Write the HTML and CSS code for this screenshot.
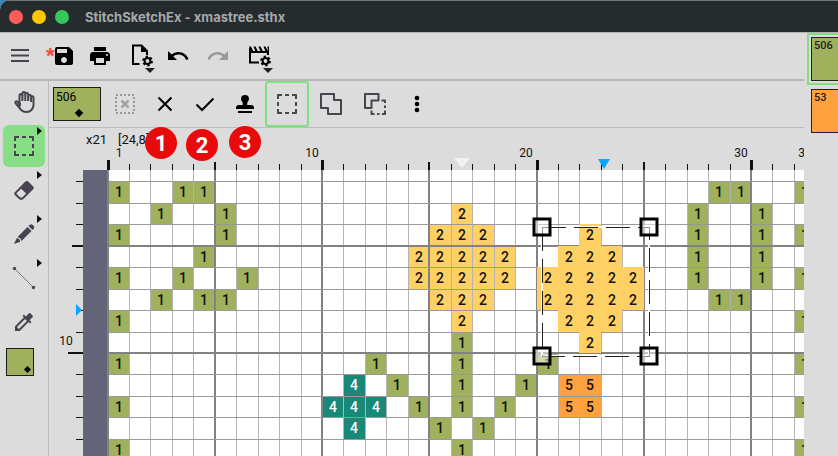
FILE: index.html
```html
<!DOCTYPE html>
<html lang="en">
<head>
    <meta charset="UTF-8">
    <meta name="viewport" content="width=device-width, initial-scale=1.0">
    <title>StitchSketchEx - xmastree.sthx</title>
    <link rel="stylesheet" href="styles.css">
</head>
<body>
    <div class="window">
        <header class="titlebar">
            <span class="light close"></span>
            <span class="light minimize"></span>
            <span class="light maximize"></span>
            <h1 class="title">StitchSketchEx - xmastree.sthx</h1>
        </header>

        <div class="workspace">
            <div class="editor">
                <!-- Main toolbar -->
                <div class="toolbar">
                    <button class="icon-button" aria-label="Menu">
                        <svg viewBox="0 0 24 24"><path class="soft-stroke" d="M3 6h18M3 11.500h18M3 17h18"/></svg>
                    </button>
                    <button class="icon-button after-menu" aria-label="Save">
                        <span class="unsaved">*</span>
                        <svg viewBox="0 0 24 24"><path d="M17 3H5a2 2 0 0 0-2 2v14a2 2 0 0 0 2 2h14c1.100 0 2-.9 2-2V7l-4-4zm-5 16c-1.660 0-3-1.340-3-3s1.340-3 3-3 3 1.340 3 3-1.340 3-3 3zm3-10H5V5h10v4z"/></svg>
                    </button>
                    <button class="icon-button" aria-label="Print">
                        <svg viewBox="0 0 24 24"><path d="M19 8H5c-1.660 0-3 1.340-3 3v6h4v4h12v-4h4v-6c0-1.660-1.340-3-3-3zm-3 11H8v-5h8v5zm3-7c-.55 0-1-.45-1-1s.45-1 1-1 1 .45 1 1-.45 1-1 1zm-1-9H6v4h12V3z"/></svg>
                    </button>
                    <button class="icon-button spaced" aria-label="Document settings">
                        <svg viewBox="0 0 24 24">
                            <path class="line" d="M9.500 20H3V1.500h8.500L17 7v4"/>
                            <path d="M11 1.500l6.500 6.500H11z"/>
                            <circle class="gear-teeth" cx="17.500" cy="17" r="4.400"/>
                            <circle class="gear-ring" cx="17.500" cy="17" r="2.900"/>
                        </svg>
                        <span class="drop"></span>
                    </button>
                    <button class="icon-button" aria-label="Undo">
                        <svg viewBox="0 0 24 24"><path d="M12.500 8c-2.650 0-5.050.99-6.900 2.600L2 7v9h9l-3.620-3.620c1.390-1.160 3.160-1.880 5.120-1.880 3.540 0 6.550 2.310 7.600 5.500l2.370-.78C21.080 11.030 17.150 8 12.500 8z"/></svg>
                    </button>
                    <button class="icon-button near" aria-label="Redo" disabled>
                        <svg viewBox="0 0 24 24"><path d="M18.400 10.600C16.550 8.990 14.150 8 11.500 8c-4.650 0-8.580 3.030-9.960 7.220L3.900 16c1.050-3.190 4.050-5.500 7.600-5.500 1.950 0 3.730.72 5.120 1.880L13 16h9V7l-3.600 3.600z"/></svg>
                    </button>
                    <button class="icon-button spaced" aria-label="Movie settings">
                        <svg viewBox="0 0 24 24">
                            <path class="line" d="M11 18.500H2V4M2 8h18v3"/>
                            <path d="M1 2.500h2l2.500 5H3zM5.500 2.500h2l2.500 5H7.500zM10.500 2.500h2l2.500 5h-2.500zM15.500 2.500h2l2.500 5h-2.500zM19.500 2.500H21V9h-1z"/>
                            <circle class="gear-teeth" cx="17.500" cy="17" r="4.400"/>
                            <circle class="gear-ring" cx="17.500" cy="17" r="2.900"/>
                        </svg>
                        <span class="drop"></span>
                    </button>
                </div>

                <div class="body">
                    <!-- Tool rail -->
                    <nav class="rail">
                        <button class="tool" aria-label="Hand">
                            <svg viewBox="0 0 24 24"><path class="soft-stroke" d="M7.500 13V5.500a1.400 1.400 0 0 1 2.900 0V3.500a1.400 1.400 0 0 1 2.900 0v1a1.400 1.400 0 0 1 2.900 0V6.500a1.400 1.400 0 0 1 2.900 0V7.500a1.200 1.200 0 0 1 2.400 0V15c0 4-3 7-7 7-3 0-5-1-6.500-3.500L3.500 13c-.8-1.600 1.200-2.400 2.200-1.200l2.300 3.700V13"/><path class="soft-stroke" d="M10.400 5v6M13.300 4.500V11M16.200 6v5M19.100 8v4"/></svg>
                        </button>
                        <button class="tool active" aria-label="Select">
                            <svg viewBox="0 0 24 24"><path class="soft-stroke" d="M3 7V3h4M10 3h4M17 3h4v4M21 10v4M21 17v4h-4M14 21h-4M7 21H3v-4M3 14v-4"/></svg>
                            <span class="flyout"></span>
                        </button>
                        <button class="tool" aria-label="Eraser">
                            <svg viewBox="0 0 24 24"><path class="soft" d="M16.240 3.560l4.950 4.940c.78.79.78 2.050 0 2.840L12 20.530a4.008 4.008 0 0 1-5.660 0L2.810 17c-.78-.79-.78-2.050 0-2.840l10.600-10.600c.79-.78 2.050-.78 2.830 0M4.220 15.580l3.540 3.530c.78.79 2.040.79 2.830 0l3.530-3.530-4.950-4.950-4.950 4.950z"/></svg>
                            <span class="flyout"></span>
                        </button>
                        <button class="tool" aria-label="Pencil">
                            <svg viewBox="0 0 24 24"><path class="soft" d="M16.500 4l1.300-1.200c.8-.8 2-.8 2.800 0l1.100 1.100c.8.8.8 2 0 2.800L20.400 8zM15.500 5l4 4L9.500 19l-1.200-2.800L5.500 15zM4.800 16l2.500 1 1 2.700L2 22z"/></svg>
                            <span class="flyout"></span>
                        </button>
                        <button class="tool" aria-label="Line">
                            <svg viewBox="0 0 24 24"><path class="guide" d="M2.500 2.500l19 19"/><circle class="soft" cx="2.500" cy="2.500" r="1.700"/><circle class="soft" cx="21.500" cy="21.500" r="1.700"/></svg>
                            <span class="flyout"></span>
                        </button>
                        <button class="tool" aria-label="Color picker">
                            <svg viewBox="0 0 24 24"><path class="soft" d="M20.710 5.630l-2.340-2.340a.996.996 0 0 0-1.410 0l-3.120 3.120-1.930-1.910-1.410 1.410 1.420 1.420L3 16.250V21h4.750l8.920-8.920 1.420 1.420 1.410-1.410-1.920-1.920 3.120-3.120c.4-.4.4-1.030.01-1.420zM6.920 19L5 17.080l8.060-8.060 1.920 1.920L6.920 19z"/></svg>
                        </button>
                        <button class="swatch current" aria-label="Current color"><span class="diamond"></span></button>
                    </nav>

                    <div class="stage">
                        <!-- Selection options -->
                        <div class="options">
                            <button class="swatch wide">506<span class="diamond"></span></button>
                            <button class="option" aria-label="Clear selection" disabled>
                                <svg viewBox="0 0 24 24"><path class="dotted" d="M3 3h18v18H3z"/><path class="line" d="M8.500 8.500l7 7M15.500 8.500l-7 7"/></svg>
                            </button>
                            <button class="option" aria-label="Cancel">
                                <svg viewBox="0 0 24 24"><path class="line" d="M5.500 5.500l13 13M18.500 5.500l-13 13"/></svg>
                            </button>
                            <button class="option" aria-label="Apply">
                                <svg viewBox="0 0 24 24"><path class="line" d="M3.500 12.500L9 18 20.500 6.500"/></svg>
                            </button>
                            <button class="option" aria-label="Stamp">
                                <svg viewBox="0 0 24 24"><path d="M12 3a4 4 0 0 1 4 4c0 2-1.800 2.500-1.800 4.500V13H18a3 3 0 0 1 3 3v1H3v-1a3 3 0 0 1 3-3h3.800v-1.500C9.800 9.500 8 9 8 7a4 4 0 0 1 4-4zM5 19h14v2H5z"/></svg>
                            </button>
                            <button class="option large active" aria-label="New selection">
                                <svg viewBox="0 0 24 24"><path class="soft-stroke" d="M3 7V3h4M10 3h4M17 3h4v4M21 10v4M21 17v4h-4M14 21h-4M7 21H3v-4M3 14v-4"/></svg>
                            </button>
                            <button class="option large" aria-label="Add to selection">
                                <svg viewBox="0 0 24 24"><path class="soft-stroke" d="M2 2h13v6h7v14H9v-6H2z"/></svg>
                            </button>
                            <button class="option large" aria-label="Subtract from selection">
                                <svg viewBox="0 0 24 24"><path class="soft-stroke" d="M2 2h13.500v6.500H8.500V16H2zM18.500 8.500H22V11M22 13.500v2.500M22 18.500V22h-3M16.500 22H14M11.500 22h-3v-3.500"/></svg>
                            </button>
                            <button class="option" aria-label="More">
                                <svg viewBox="0 0 24 24"><circle cx="12" cy="6" r="2.300"/><circle cx="12" cy="12" r="2.300"/><circle cx="12" cy="18" r="2.300"/></svg>
                            </button>
                        </div>

                        <main class="canvas">
                            <svg id="chart" class="chart" role="img" aria-label="Stitch chart"></svg>
                            <span class="badge first">1</span>
                            <span class="badge second">2</span>
                            <span class="badge third">3</span>
                        </main>
                    </div>
                </div>
            </div>

            <!-- Thread palette -->
            <aside class="palette">
                <button class="thread selected"><span class="chip green">506</span></button>
                <button class="thread"><span class="chip orange">53</span></button>
            </aside>
        </div>
    </div>

    <script src="chart.js"></script>
</body>
</html>
```
FILE: chart.js
```js
const chart = document.getElementById('chart');
const CELL = 429 / 20; // 20 stitches in 429px
const LEFT = 59;
const TOP = 11;
const RULER = 42;
const COLUMNS = 33;
const ROWS = 40;

// row: { symbol: columns }
const stitches = {
    3: { 1: [1, 4, 5, 29, 30, 33] },
    4: { 1: [3, 6, 28, 31], 2: [17] },
    5: { 1: [1, 6, 28, 31, 33], 2: [16, 17, 18] },
    6: { 1: [5, 28, 31], 2: [15, 16, 17, 18, 19] },
    7: { 1: [1, 4, 7, 28, 31, 33], 2: [15, 16, 17, 18, 19] },
    8: { 1: [3, 5, 6, 29, 30], 2: [16, 17, 18] },
    9: { 1: [1, 33], 2: [17] },
    10: { 1: [17] },
    11: { 1: [1, 13, 17, 21, 33] },
    12: { 1: [14, 17, 20], 4: [12], 5: [22, 23] },
    13: { 1: [1, 15, 17, 19, 33], 4: [11, 12, 13], 5: [22, 23] },
    14: { 1: [16, 18], 4: [12] },
    15: { 1: [1, 17, 33] }
};

// floating selection
const selected = {
    5: [23],
    6: [22, 23, 24],
    7: [21, 22, 23, 24, 25],
    8: [21, 22, 23, 24, 25],
    9: [22, 23, 24],
    10: [23]
};

const colX = n => Math.floor(LEFT + n * CELL);
const rowY = n => Math.floor(TOP + n * CELL);

function add(name, attributes, text) {
    const node = document.createElementNS('http://www.w3.org/2000/svg', name);
    for (const key in attributes) {
        node.setAttribute(key, attributes[key]);
    }
    if (text !== undefined) {
        node.textContent = text;
    }
    chart.appendChild(node);
}

function rect(x, y, width, height, className) {
    add('rect', { x, y, width, height, class: className });
}

function cell(row, col, symbol) {
    const x = colX(col - 1);
    const y = rowY(row - 1);
    rect(x, y, colX(col) - x, rowY(row) - y, 'stitch-' + symbol);
}

function symbolText(row, col, symbol) {
    add('text', { x: colX(col - 1) + 11, y: rowY(row - 1) + 16, class: 'symbol symbol-' + symbol }, symbol);
}

function eachStitch(draw) {
    for (const row in stitches) {
        for (const symbol in stitches[row]) {
            stitches[row][symbol].forEach(col => draw(Number(row), col, symbol));
        }
    }
}

// Paper and stitches
rect(LEFT, RULER, '100%', '100%', 'paper');
eachStitch(cell);

// Grid lines
for (let c = 1; c <= COLUMNS; c++) {
    const major = c % 5 === 0;
    rect(colX(c) - (major ? 1 : 0), RULER, major ? 2 : 1, '100%', major ? 'major' : 'minor-x');
}
for (let r = 2; r <= ROWS; r++) {
    const major = r % 5 === 0;
    rect(LEFT, rowY(r) - (major ? 1 : 0), '100%', major ? 2 : 1, major ? 'major' : 'minor-y');
}

// Margin
rect(34, RULER, LEFT - 35, '100%', 'margin');
rect(LEFT - 1, RULER, 2, '100%', 'major');
eachStitch(symbolText);

// Rulers
for (let c = 0; c <= COLUMNS; c++) {
    const length = c % 10 === 0 ? 10 : c % 5 === 0 ? 8 : 6;
    const width = c % 10 === 0 ? 3 : c % 5 === 0 ? 2 : 1;
    rect(colX(c) - (width > 1 ? 1 : 0), RULER - length, width, length, 'tick');
}
for (let r = 2; r <= ROWS; r++) {
    const length = r % 10 === 0 ? 15 : r % 5 === 0 ? 11 : 7;
    const width = r % 5 === 0 ? 2 : 1;
    rect(34 - length, rowY(r) - (width > 1 ? 1 : 0), length, width, 'tick');
}
[1, 10, 20, 30, 33].forEach(n => {
    add('text', { x: colX(n - 1) + 11, y: 29, class: 'label' }, n);
});
add('text', { x: 17, y: 217, class: 'label' }, 10);
add('text', { x: 37, y: 16, class: 'status' }, 'x21');
add('text', { x: 69, y: 16, class: 'status' }, '[24,8]');

// Cursor markers
add('path', { d: 'M405 30h16l-8 10z', class: 'marker-light' });
add('path', { d: 'M549 31h12l-6 10z', class: 'marker-blue' });
add('path', { d: 'M27 176v12l6-6z', class: 'marker-blue' });

// Selection
for (const row in selected) {
    selected[row].forEach(col => cell(Number(row), col, 2));
}
for (const row in selected) {
    selected[row].forEach(col => symbolText(Number(row), col, 2));
}
const box = { x: 493, y: 99, width: 107, height: 129 };
add('rect', { ...box, class: 'box-light' });
add('rect', { ...box, class: 'box-dash' });
[box.x, box.x + box.width].forEach(x => {
    [box.y, box.y + box.height].forEach(y => {
        add('rect', { x: x - 8, y: y - 8, width: 16, height: 16, class: 'handle' });
    });
});
```
FILE: styles.css
```css
* {
    box-sizing: border-box;
}
body {
    font-family: Roboto, "Liberation Sans", Arial, sans-serif;
    margin: 0;
    background: #3c87b8;
    color: #111;
}
button {
    font-family: inherit;
    margin: 0;
    padding: 0;
    border: none;
    background: none;
    color: #000;
    cursor: pointer;
}
button:disabled {
    opacity: 0.3;
}
svg {
    display: block;
    fill: currentColor;
}
.window {
    display: flex;
    flex-direction: column;
    height: 100vh;
    background: #dcdcdc;
    border-top-left-radius: 10px;
    overflow: hidden;
}
.titlebar {
    display: flex;
    align-items: center;
    gap: 9px;
    height: 33px;
    flex-shrink: 0;
    padding-left: 9px;
    background: #262b2e;
    border-top: 1px solid #70777a;
    border-bottom: 1px solid #b4b4b4;
}
.light {
    width: 14px;
    height: 14px;
    border-radius: 50%;
}
.close {
    background: #ff5b5a;
}
.minimize {
    background: #fdc800;
}
.maximize {
    background: #34c759;
}
.title {
    margin: 0 0 0 7px;
    font-family: Inter, sans-serif;
    font-size: 13px;
    font-weight: 700;
    color: #a5a9ab;
}
.workspace {
    display: flex;
    flex: 1;
    min-height: 0;
}
.editor {
    display: flex;
    flex-direction: column;
    flex: 1;
    min-width: 0;
}
.toolbar {
    display: flex;
    align-items: center;
    gap: 10px;
    height: 48px;
    flex-shrink: 0;
    padding: 0 7px;
    border-bottom: 2px solid #b6b6b6;
}
.icon-button {
    position: relative;
    width: 26px;
    height: 40px;
}
.icon-button svg {
    width: 24px;
    height: 24px;
    margin: 0 auto;
}
.spaced {
    margin-left: 6px;
}
.near {
    margin-left: 4px;
}
.after-menu {
    margin-left: 8px;
}
.unsaved {
    position: absolute;
    top: 9px;
    left: -5px;
    font-family: "Liberation Sans", Arial, sans-serif;
    font-size: 22px;
    font-weight: bold;
    line-height: 22px;
    color: #ff453a;
}
.drop {
    position: absolute;
    right: 0;
    bottom: 3px;
    border: 5px solid transparent;
    border-top-color: #222;
    border-bottom: none;
}
.body {
    display: flex;
    flex: 1;
    min-height: 0;
}
.rail {
    display: flex;
    flex-direction: column;
    align-items: center;
    gap: 2px;
    width: 49px;
    flex-shrink: 0;
    border-right: 1px solid #bcbcbc;
}
.tool {
    position: relative;
    width: 42px;
    height: 42px;
    flex-shrink: 0;
    border-radius: 6px;
}
.tool svg {
    width: 24px;
    height: 24px;
    margin: 0 auto;
}
.tool.active {
    background: #87de87;
}
.flyout {
    position: absolute;
    top: 2px;
    right: 3px;
    border: 4px solid transparent;
    border-left: 5px solid #111;
    border-right: none;
}
.swatch {
    position: relative;
    border: 1px solid #1c1f10;
    background: #a0b15d;
    text-align: left;
}
.swatch.current {
    width: 28px;
    height: 28px;
    margin: 3px 8px 0 0;
    flex-shrink: 0;
}
.swatch.wide {
    width: 48px;
    height: 34px;
    margin-right: 4px;
    padding: 0 0 14px 2px;
    font-size: 12px;
}
.diamond {
    position: absolute;
    right: 3px;
    bottom: 3px;
    width: 5px;
    height: 5px;
    background: #000;
    transform: rotate(45deg);
}
.wide .diamond {
    right: 18px;
    bottom: 4px;
    width: 6px;
    height: 6px;
}
.stage {
    display: flex;
    flex-direction: column;
    flex: 1;
    min-width: 0;
}
.options {
    display: flex;
    align-items: center;
    height: 47px;
    flex-shrink: 0;
    padding-left: 4px;
    border-bottom: 1px solid #bcbcbc;
}
.option {
    width: 40px;
    height: 46px;
}
.option svg {
    width: 24px;
    height: 24px;
    margin: 0 auto;
}
.option.large {
    width: 44px;
}
.option.active {
    border: 2px solid #80df80;
    border-radius: 3px;
}
.line {
    fill: none;
    stroke: currentColor;
    stroke-width: 2;
}
.soft {
    fill: #48434f;
}
.soft-stroke {
    fill: none;
    stroke: #48434f;
    stroke-width: 2;
    stroke-linejoin: round;
}
.dotted {
    fill: none;
    stroke: currentColor;
    stroke-width: 2;
    stroke-dasharray: 2 2;
}
.guide {
    stroke: #77737c;
    stroke-width: 1;
}
.gear-teeth {
    fill: none;
    stroke: currentColor;
    stroke-width: 2;
    stroke-dasharray: 2.300;
}
.gear-ring {
    fill: none;
    stroke: currentColor;
    stroke-width: 2;
}
.canvas {
    position: relative;
    flex: 1;
    min-height: 0;
}
.chart {
    width: 100%;
    height: 100%;
    overflow: hidden;
}
.paper {
    fill: #fff;
}
.margin {
    fill: #646479;
}
.minor-x {
    fill: #b4b4b4;
}
.minor-y {
    fill: #999;
}
.major {
    fill: #828282;
}
.tick {
    fill: #111;
}
.stitch-1 {
    fill: #a0b15d;
}
.stitch-2 {
    fill: #ffd064;
}
.stitch-4 {
    fill: #188878;
}
.stitch-5 {
    fill: #ffa13f;
}
.symbol {
    font-size: 14px;
    font-weight: 500;
    text-anchor: middle;
    fill: #111;
}
.symbol-4 {
    fill: #fff;
}
.label {
    font-size: 12px;
    text-anchor: middle;
    fill: #111;
}
.status {
    font-size: 13px;
    fill: #111;
}
.marker-light {
    fill: #f2f2f2;
}
.marker-blue {
    fill: #0aa5ff;
}
.box-light {
    fill: none;
    stroke: #fff;
    stroke-width: 2;
}
.box-dash {
    fill: none;
    stroke: #222;
    stroke-width: 1;
    stroke-dasharray: 24 8;
    shape-rendering: crispEdges;
}
.handle {
    fill: #fff;
    fill-opacity: 0.5;
    stroke: #000;
    stroke-width: 3;
}
.badge {
    position: absolute;
    width: 32px;
    height: 32px;
    border-radius: 50%;
    background: #e90b0b;
    color: #fff;
    font-size: 22px;
    font-weight: bold;
    line-height: 34px;
    text-align: center;
}
.first {
    top: -1px;
    left: 96px;
}
.second {
    top: 1px;
    left: 137px;
}
.third {
    top: -2px;
    left: 180px;
}
.palette {
    width: 34px;
    flex-shrink: 0;
    padding-left: 3px;
    overflow: hidden;
}
.thread {
    display: block;
    width: 64px;
    height: 52px;
    padding: 2px;
    border: 2px solid transparent;
}
.thread.selected {
    border-color: #80df80;
}
.chip {
    display: block;
    height: 44px;
    padding: 1px 2px;
    border: 1px solid #222;
    font-size: 11px;
    font-weight: 500;
    text-align: left;
    color: #222;
}
.green {
    background: #a0b15d;
}
.orange {
    background: #ffa13f;
}
```
